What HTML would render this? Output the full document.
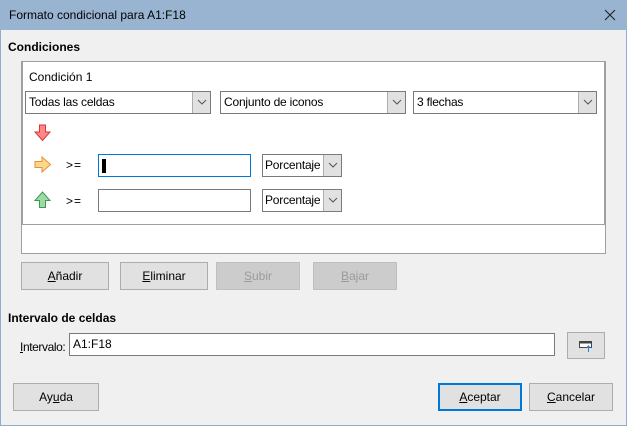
<!DOCTYPE html><html><head><meta charset="utf-8"><style>
*{box-sizing:border-box;margin:0;padding:0}
body{width:627px;height:426px;background:#f0f0f0;font-family:"Liberation Sans",sans-serif;font-size:12px;color:#000;position:relative;overflow:hidden}
.a{position:absolute}
.title{left:0;top:0;width:627px;height:30px;background:#99b4d1}
.sel{position:absolute;background:#fff;border:1px solid #7a7a7a;height:23px;line-height:21px;padding-left:3px;white-space:nowrap;letter-spacing:-0.2px}
.sel .b{position:absolute;right:0;top:0;width:18px;height:21px;background:#e1e1e1;border-left:1px solid #adadad}
.sel .b svg{position:absolute;left:4px;top:7px}
.btn{position:absolute;height:28px;background:#e1e1e1;border:1px solid #adadad;text-align:center;line-height:26px}
.dis{color:#9a9a9a;background:#cccccc;border-color:#bfbfbf}
.inp{position:absolute;background:#fff;border:1px solid #7a7a7a;height:23px;line-height:21px;padding-left:4px}
u{text-decoration:underline}
</style></head><body>
<div class="a" style="left:0;top:0;width:627px;height:426px;border:1px solid #8fadd0"></div>
<div class="a title"></div>
<div class="a" style="left:9px;top:8px;font-size:12px">Formato condicional para A1:F18</div>
<svg class="a" style="left:604px;top:9px" width="12" height="12"><path d="M1 1L11 11M11 1L1 11" stroke="#222" stroke-width="1.1"/></svg>
<div class="a" style="left:8px;top:40px;font-weight:bold">Condiciones</div>
<div class="a" style="left:21px;top:61px;width:585px;height:193px;background:#fff;border:1px solid #a0a0a0"></div>
<div class="a" style="left:21px;top:61px;width:585px;height:164px;border:1px solid #a0a0a0;border-left:2px solid #a0a0a0;border-right:2px solid #a0a0a0"></div>
<div class="a" style="left:29px;top:70px">Condición 1</div>
<div class="sel" style="left:25px;top:91px;width:186px">Todas las celdas<div class="b"><svg width="10" height="6"><path d="M1 1L5 5L9 1" stroke="#555" fill="none"/></svg></div></div>
<div class="sel" style="left:220px;top:91px;width:186px">Conjunto de iconos<div class="b"><svg width="10" height="6"><path d="M1 1L5 5L9 1" stroke="#555" fill="none"/></svg></div></div>
<div class="sel" style="left:413px;top:91px;width:184px">3 flechas<div class="b"><svg width="10" height="6"><path d="M1 1L5 5L9 1" stroke="#555" fill="none"/></svg></div></div>
<svg class="a" style="left:34px;top:124px" width="18" height="18"><path d="M5.5 1H11.5V8H16L8.5 16.5L1 8H5.5Z" fill="#f88" stroke="#d33"/></svg>
<svg class="a" style="left:34px;top:156px" width="18" height="18"><path d="M1 5.5H8V1L16.5 8.5L8 16V11.5H1Z" fill="#fbd88a" stroke="#ee8a3a"/></svg>
<svg class="a" style="left:34px;top:191px" width="18" height="18"><path d="M5.5 16.5H11.5V9.5H16L8.5 1L1 9.5H5.5Z" fill="#9ed9a6" stroke="#3a9a50"/></svg>
<div class="a" style="left:66px;top:158px;letter-spacing:1px">&gt;=</div>
<div class="a" style="left:66px;top:194px;letter-spacing:1px">&gt;=</div>
<div class="inp" style="left:98px;top:154px;width:153px;border-color:#0078d7"><div style="position:absolute;left:3px;top:4px;width:4px;height:14px;background:#000"></div></div>
<div class="inp" style="left:98px;top:189px;width:153px"></div>
<div class="sel" style="left:262px;top:154px;width:80px;padding-left:2px">Porcentaje<div class="b"><svg width="10" height="6"><path d="M1 1L5 5L9 1" stroke="#555" fill="none"/></svg></div></div>
<div class="sel" style="left:262px;top:189px;width:80px;padding-left:2px">Porcentaje<div class="b"><svg width="10" height="6"><path d="M1 1L5 5L9 1" stroke="#555" fill="none"/></svg></div></div>
<div class="btn" style="left:21px;top:262px;width:88px"><u>A</u>ñadir</div>
<div class="btn" style="left:120px;top:262px;width:88px"><u>E</u>liminar</div>
<div class="btn dis" style="left:216px;top:262px;width:84px"><u>S</u>ubir</div>
<div class="btn dis" style="left:313px;top:262px;width:84px"><u>B</u>ajar</div>
<div class="a" style="left:8px;top:311px;font-weight:bold">Intervalo de celdas</div>
<div class="a" style="left:20px;top:340px;letter-spacing:-0.4px"><u>I</u>ntervalo:</div>
<div class="inp" style="left:69px;top:333px;width:486px;padding-left:3px">A1:F18</div>
<div class="btn" style="left:567px;top:332px;width:38px;height:27px"><svg style="margin-top:8px" width="14" height="12"><rect x="0.5" y="0.5" width="12" height="6" fill="#fff" stroke="#444"/><rect x="0.5" y="0.5" width="12" height="2" fill="#444"/><path d="M9.5 11V5M7.5 7L9.5 5L11.5 7" stroke="#2a7fd4" fill="none"/></svg></div>
<div class="btn" style="left:13px;top:383px;width:86px">Ay<u>u</u>da</div>
<div class="btn" style="left:438px;top:383px;width:84px;border:2px solid #0078d7;line-height:24px"><u>A</u>ceptar</div>
<div class="btn" style="left:529px;top:383px;width:84px"><u>C</u>ancelar</div>
</body></html>
